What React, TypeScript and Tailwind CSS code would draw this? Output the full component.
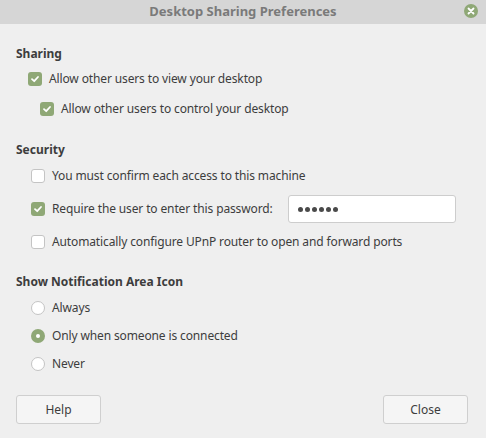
import React from "react";

const font = { fontFamily: '"Noto Sans", "Open Sans", sans-serif' };

function Check({ checked }: { checked: boolean }) {
  return checked ? (
    <div className="w-[14px] h-[14px] rounded-[3px] bg-[#8fa876] flex items-center justify-center shrink-0">
      <svg width="10" height="10" viewBox="0 0 10 10">
        <path d="M2 5.2 L4.2 7.2 L8 3" stroke="white" strokeWidth="1.8" fill="none" strokeLinecap="round" strokeLinejoin="round" />
      </svg>
    </div>
  ) : (
    <div className="w-[14px] h-[14px] rounded-[3px] bg-white border border-[#c4c4c4] shrink-0" />
  );
}

function Radio({ checked }: { checked: boolean }) {
  return checked ? (
    <div className="w-[14px] h-[14px] rounded-full bg-[#8fa876] flex items-center justify-center shrink-0">
      <div className="w-[4px] h-[4px] rounded-full bg-white" />
    </div>
  ) : (
    <div className="w-[14px] h-[14px] rounded-full bg-white border border-[#c4c4c4] shrink-0" />
  );
}

export default function App() {
  return (
    <div className="w-[486px] h-[438px] bg-[#efefef] flex flex-col text-[12px] text-[#3d3d3d]" style={font}>
      <div className="h-[24px] bg-[#d6d6d6] relative flex items-center justify-center">
        <span className="font-bold text-[13px] text-[#7a7a7a]">Desktop Sharing Preferences</span>
        <div className="absolute left-[464px] top-[4px] w-[14px] h-[14px] rounded-full bg-[#8fa876] flex items-center justify-center">
          <svg width="8" height="8" viewBox="0 0 8 8">
            <path d="M1.5 1.5 L6.5 6.5 M6.5 1.5 L1.5 6.5" stroke="white" strokeWidth="1.8" strokeLinecap="round" />
          </svg>
        </div>
      </div>

      <div className="flex flex-col pl-[16px] tracking-[-0.13px]">
        <div className="h-[18px] mt-[21px] flex items-center font-bold tracking-normal">Sharing</div>
        <div className="h-[18px] mt-[7px] pl-[12px] flex items-center gap-[7px]">
          <Check checked />
          <span>Allow other users to view your desktop</span>
        </div>
        <div className="h-[18px] mt-[12px] pl-[24px] flex items-center gap-[7px]">
          <Check checked />
          <span>Allow other users to control your desktop</span>
        </div>

        <div className="h-[18px] mt-[23px] flex items-center font-bold tracking-normal">Security</div>
        <div className="h-[18px] mt-[8px] pl-[15px] flex items-center gap-[7px]">
          <Check checked={false} />
          <span>You must confirm each access to this machine</span>
        </div>
        <div className="h-[28px] mt-[10px] pl-[15px] flex items-center gap-[7px]">
          <Check checked />
          <span className="w-[229px]">Require the user to enter this password:</span>
          <div className="w-[168px] h-[28px] bg-white border border-[#cdcdcd] rounded-[3px] flex items-center pl-[9px] gap-[2px]">
            <div className="w-[5px] h-[5px] rounded-full bg-[#4a4a4a]" />
            <div className="w-[5px] h-[5px] rounded-full bg-[#4a4a4a]" />
            <div className="w-[5px] h-[5px] rounded-full bg-[#4a4a4a]" />
            <div className="w-[5px] h-[5px] rounded-full bg-[#4a4a4a]" />
            <div className="w-[5px] h-[5px] rounded-full bg-[#4a4a4a]" />
            <div className="w-[5px] h-[5px] rounded-full bg-[#4a4a4a]" />
          </div>
        </div>
        <div className="h-[18px] mt-[10px] pl-[15px] flex items-center gap-[7px]">
          <Check checked={false} />
          <span>Automatically configure UPnP router to open and forward ports</span>
        </div>

        <div className="h-[18px] mt-[22px] flex items-center font-bold tracking-normal">Show Notification Area Icon</div>
        <div className="h-[18px] mt-[8px] pl-[15px] flex items-center gap-[7px]">
          <Radio checked={false} />
          <span>Always</span>
        </div>
        <div className="h-[18px] mt-[10px] pl-[15px] flex items-center gap-[7px]">
          <Radio checked />
          <span>Only when someone is connected</span>
        </div>
        <div className="h-[18px] mt-[10px] pl-[15px] flex items-center gap-[7px]">
          <Radio checked={false} />
          <span>Never</span>
        </div>
      </div>

      <div className="flex justify-between mt-[22px] pl-[16px] pr-[18px]">
        <button className="w-[85px] h-[29px] bg-[#f5f5f5] border border-[#cfcfcf] rounded-[3px] text-[#3d3d3d]">Help</button>
        <button className="w-[85px] h-[29px] bg-[#f5f5f5] border border-[#cfcfcf] rounded-[3px] text-[#3d3d3d]">Close</button>
      </div>
    </div>
  );
}
